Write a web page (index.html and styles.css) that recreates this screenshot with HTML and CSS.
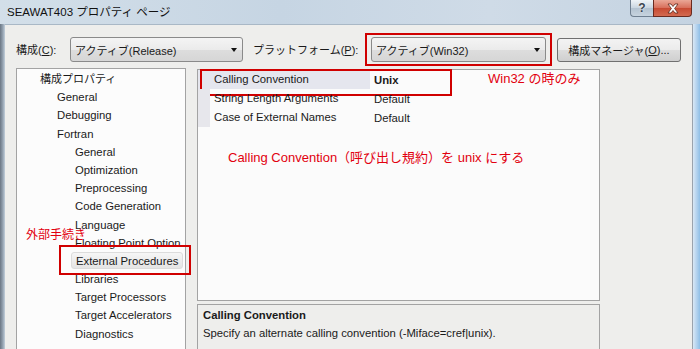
FILE: index.html
```html
<!DOCTYPE html>
<html lang="ja">
<head>
<meta charset="utf-8">
<title>SEAWAT403 プロパティ ページ</title>
<link rel="stylesheet" href="styles.css">
</head>
<body>
<div class="window">
  <div class="titlebar">
    <span class="title">SEAWAT403 プロパティ ページ</span>
    <div class="caption-buttons">
      <span class="cb help">?</span>
      <span class="cb close">
        <svg width="14" height="11" viewBox="0 0 14 11"><path d="M2 1 L5 1 L7 3.5 L9 1 L12 1 L8.6 5.5 L12 10 L9 10 L7 7.5 L5 10 L2 10 L5.4 5.5 Z" fill="#fff" stroke="#5a2418" stroke-width="0.8" stroke-linejoin="round"/></svg>
      </span>
    </div>
  </div>
  <div class="frame-row">
    <div class="frame-left"></div>
    <div class="client">
      <div class="toolbar">
        <span class="lbl lbl1">構成(<u>C</u>):</span>
        <div class="combo combo1"><span class="combo-text">アクティブ(Release)</span><span class="arrow"></span></div>
        <span class="lbl lbl2">プラットフォーム(<u>P</u>):</span>
        <div class="combo combo2 marked"><span class="combo-text">アクティブ(Win32)</span><span class="arrow"></span></div>
        <div class="btn">構成マネージャ(<u>O</u>)...</div>
      </div>
      <div class="main">
        <div class="tree">
          <div class="node l0">構成プロパティ</div>
          <div class="node l1">General</div>
          <div class="node l1">Debugging</div>
          <div class="node l1">Fortran</div>
          <div class="node l2">General</div>
          <div class="node l2">Optimization</div>
          <div class="node l2">Preprocessing</div>
          <div class="node l2">Code Generation</div>
          <div class="node l2">Language</div>
          <div class="node l2">Floating Point Option</div>
          <div class="node l2"><span class="sel">External Procedures</span></div>
          <div class="node l2">Libraries</div>
          <div class="node l2">Target Processors</div>
          <div class="node l2">Target Accelerators</div>
          <div class="node l2">Diagnostics</div>
          <span class="note note-tree">外部手続き</span>
        </div>
        <div class="right">
          <div class="grid">
            <div class="row selected">
              <span class="gutter"></span><span class="name">Calling Convention</span><span class="value bold">Unix</span>
            </div>
            <div class="row">
              <span class="gutter"></span><span class="name">String Length Arguments</span><span class="value">Default</span>
            </div>
            <div class="row">
              <span class="gutter"></span><span class="name">Case of External Names</span><span class="value">Default</span>
            </div>
            <span class="note note-win32">Win32 の時のみ</span>
            <span class="note note-cc">Calling Convention（呼び出し規約）を unix にする</span>
          </div>
          <div class="desc">
            <div class="desc-title">Calling Convention</div>
            <div class="desc-text">Specify an alternate calling convention (-Miface=cref|unix).</div>
          </div>
        </div>
      </div>
    </div>
    <div class="frame-right"></div>
  </div>
</div>
</body>
</html>
```

FILE: styles.css
```css
* { box-sizing: border-box; }
html, body { margin: 0; padding: 0; }
body {
  width: 700px;
  height: 349px;
  overflow: hidden;
  font-family: "Liberation Sans", "Noto Sans CJK JP", sans-serif;
  font-size: 11.3px;
  color: #1a1a1a;
  background: #c9d7e4;
}
.window {
  width: 700px;
  height: 349px;
  display: flex;
  flex-direction: column;
  background: linear-gradient(90deg, #d3dfe9 0%, #c6d5e3 40%, #cfdbe7 70%, #c4d3e1 100%);
}
.titlebar {
  height: 24px;
  flex: none;
  display: flex;
  align-items: flex-start;
  padding-left: 7px;
  padding-right: 8px;
}
.title {
  font-size: 11.5px;
  line-height: 25px;
  color: #111;
}
.caption-buttons {
  margin-left: auto;
  display: flex;
}
.cb {
  height: 17px;
  display: flex;
  align-items: center;
  justify-content: center;
}
.help {
  width: 23px;
  border: 1px solid #6f7f90;
  border-top: none;
  border-right: none;
  border-radius: 0 0 0 4px;
  background: linear-gradient(#eef3f7, #c9d5e0 50%, #b3c2d0 51%, #c7d4df);
  color: #3a4450;
  font-weight: bold;
  font-size: 12px;
  text-shadow: 0 0 2px #fff;
}
.close {
  width: 39px;
  border: 1px solid #6a2a1f;
  border-top: none;
  border-radius: 0 0 4px 0;
  background: linear-gradient(#eaa796, #d8705c 48%, #c74a32 52%, #d36a50);
}
.frame-row {
  flex: 1;
  display: flex;
  min-height: 0;
}
.frame-left {
  width: 5px;
  flex: none;
  background: linear-gradient(90deg, #6b7784, #98a6b4 60%, #c3d0dc);
}
.frame-right {
  width: 8px;
  flex: none;
  border-left: 1px solid #9aa3ad;
  background: linear-gradient(90deg, #d9e8f5, #b5d3ee 50%, #8fbfe7);
}
.client {
  flex: 1;
  min-width: 0;
  background: #eeeeec;
  border-top: 1px solid #a9b8c6;
  padding: 11px 0 0 11px;
  display: flex;
  flex-direction: column;
  overflow: hidden;
}
.toolbar {
  height: 26px;
  flex: none;
  display: flex;
  align-items: center;
}
.lbl {
  font-size: 11px;
  white-space: nowrap;
  color: #1a1a1a;
}
.lbl1 { width: 54px; }
.lbl2 { width: 118px; margin-left: 10px; }
.combo {
  position: relative;
  height: 25px;
  margin-top: 1px;
  border: 1px solid #8a8a8a;
  border-radius: 3px;
  background: linear-gradient(#f4f4f4, #ebebeb 50%, #dddddd 51%, #d6d6d6);
  display: flex;
  align-items: center;
  padding-left: 4px;
  font-size: 11px;
}
.combo1 { width: 173px; }
.combo2 { width: 175px; }
.combo-text { white-space: nowrap; }
.arrow {
  margin-left: auto;
  margin-right: 5px;
  width: 0;
  height: 0;
  border-left: 3.5px solid transparent;
  border-right: 3.5px solid transparent;
  border-top: 4px solid #111;
}
.marked::after {
  content: "";
  position: absolute;
  left: -7px;
  right: -7px;
  top: -5px;
  bottom: -5px;
  border: 2px solid #d00000;
}
.btn {
  width: 124px;
  height: 24px;
  margin-left: 11px;
  margin-top: 2px;
  border: 1px solid #707070;
  border-radius: 3px;
  background: linear-gradient(#f3f3f3, #ebebeb 50%, #dddddd 51%, #cfcfcf);
  display: flex;
  align-items: center;
  justify-content: center;
  font-size: 11px;
  white-space: nowrap;
}
.main {
  flex: 1;
  min-height: 0;
  margin-top: 6px;
  display: flex;
  align-items: flex-start;
}
.tree {
  position: relative;
  width: 170px;
  height: 300px;
  flex: none;
  border: 1px solid #a3a3a3;
  background: #fcfcfc;
  padding-top: 1px;
}
.node {
  height: 18.2px;
  line-height: 18.2px;
  white-space: nowrap;
  color: #1a1a1a;
}
.l0 { padding-left: 23px; font-size: 11px; }
.l1 { padding-left: 40px; }
.l2 { padding-left: 58px; }
.sel {
  position: relative;
  display: inline-block;
  margin-left: -4px;
  padding: 0 4px;
  width: 112px;
  height: 17px;
  line-height: 16px;
  border: 1px solid #dcdcdc;
  border-radius: 3px;
  background: linear-gradient(#f6f6f6, #e4e4e4);
}
.sel::after {
  content: "";
  position: absolute;
  left: -13px;
  right: -9px;
  top: -8px;
  bottom: -7px;
  border: 2px solid #d00000;
}
.note {
  position: absolute;
  color: #e2000f;
  font-family: "Liberation Sans", "Noto Sans CJK JP", sans-serif;
  font-size: 13px;
  line-height: 16px;
  white-space: nowrap;
}
.note-tree {
  left: 9px;
  top: 158px;
  font-size: 12px;
}
.right {
  width: 403px;
  margin-left: 11px;
  margin-top: 1px;
  flex: none;
  display: flex;
  flex-direction: column;
}
.grid {
  position: relative;
  height: 232px;
  border: 1px solid #a3a3a3;
  background: #fbfbfb;
}
.row {
  position: relative;
  height: 19px;
  display: flex;
  align-items: center;
}
.gutter {
  width: 12px;
  height: 19px;
  background: #e7e7ec;
  flex: none;
}
.name {
  width: 160px;
  height: 19px;
  line-height: 19px;
  padding-left: 4px;
  white-space: nowrap;
  flex: none;
}
.value {
  padding-left: 4px;
  white-space: nowrap;
}
.bold { font-weight: bold; }
.selected .gutter,
.selected .name { background: #e5e6ee; }
.selected::after {
  content: "";
  position: absolute;
  left: 2px;
  top: -1px;
  width: 248px;
  height: 23px;
  border: 2px solid #d00000;
}
.note-win32 {
  left: 290px;
  top: 1px;
}
.note-cc {
  left: 30px;
  top: 80px;
}
.desc {
  margin-top: 3px;
  height: 60px;
  border: 1px solid #a3a3a3;
  border-bottom: none;
  background: #eeeeec;
  padding: 1px 0 0 5px;
}
.desc-title {
  font-weight: bold;
  line-height: 18px;
}
.desc-text {
  line-height: 18px;
}
```
